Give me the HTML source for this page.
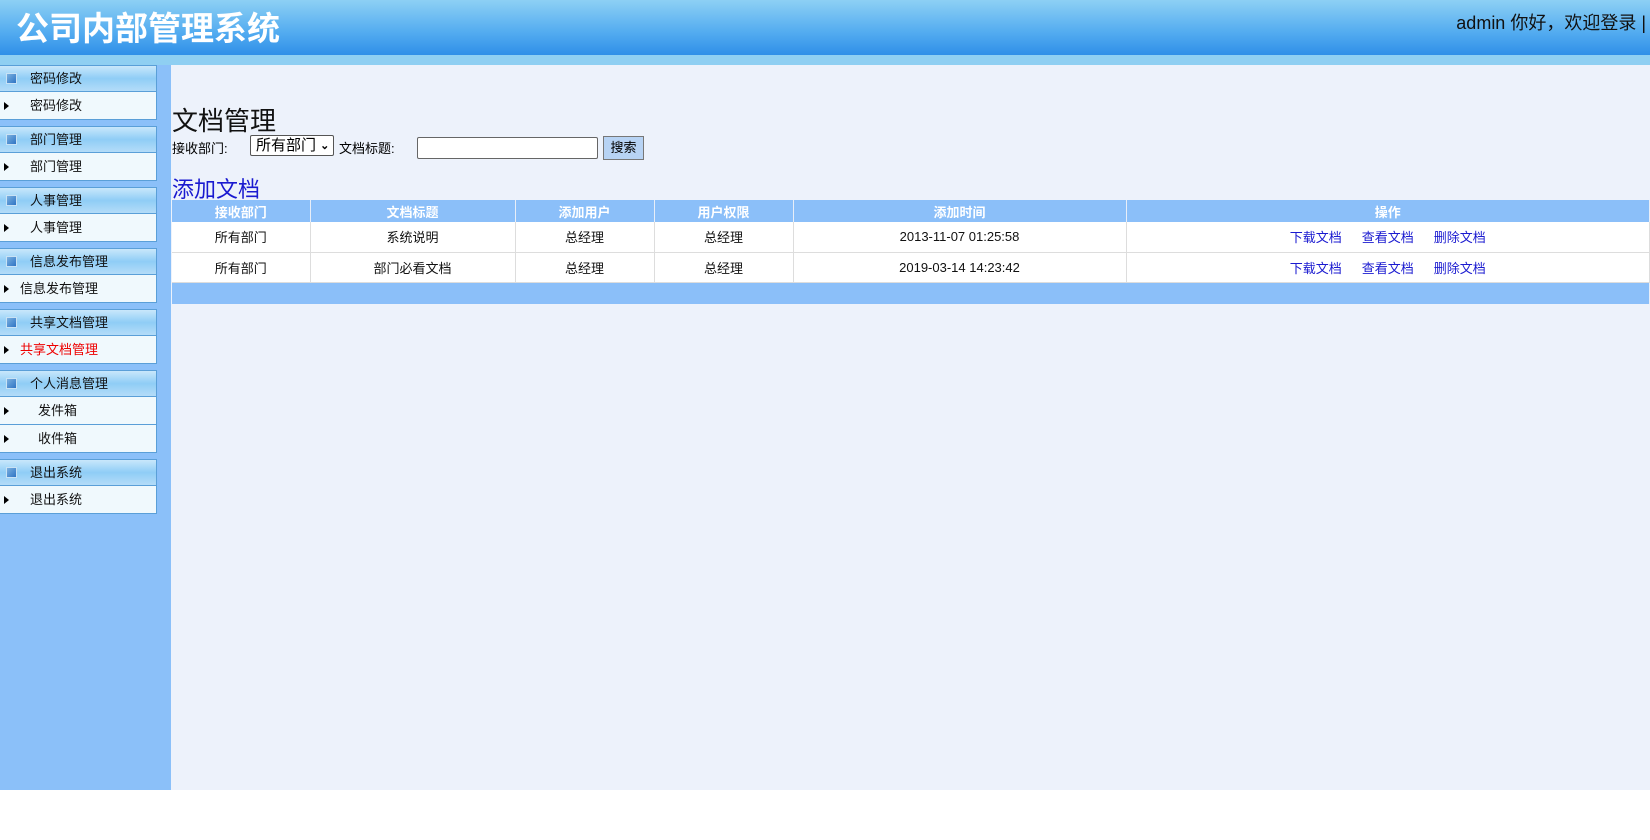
<!DOCTYPE html>
<html><head><meta charset="utf-8"><style>
*{margin:0;padding:0;box-sizing:border-box}
body{width:1650px;height:840px;background:#fff;font-family:"Liberation Sans","Noto Sans CJK SC",sans-serif;font-size:13px;position:relative;overflow:hidden}
.hd{position:absolute;left:0;top:0;width:1650px;height:55px;background:linear-gradient(#8dd0f4,#52abf0 60%,#2f8fe8)}
.hd h1{position:absolute;left:16px;top:12px;color:#fff;font-size:33px;font-weight:bold;line-height:1}
.hd .u{position:absolute;right:4px;top:9px;font-size:18px;color:#111}
.strip{position:absolute;left:0;top:55px;width:1650px;height:10px;background:#8fcff2}
.side{position:absolute;left:0;top:65px;width:171px;height:725px;background:#8bc0f9}
.main{position:absolute;left:171px;top:65px;width:1479px;height:725px;background:#edf2fb}
.g{position:absolute;left:0;width:157px;border:1px solid #5a9fd8;border-left:none;background:#f0f9fd}
.g .h{height:25px;background:linear-gradient(#c9e7fb,#8fcdf6 50%,#b4dcf8);position:relative;line-height:25px;padding-left:30px;font-size:13px;color:#111}
.g .h i{position:absolute;left:6px;top:7px;width:11px;height:11px;background:linear-gradient(135deg,#7ab0e0,#2f74c4);border:1px solid #c8e2f5}
.g .it{height:28px;line-height:27px;border-top:1px solid #5a9fd8;position:relative;padding-left:30px;color:#111}
.g .it:before{content:"";position:absolute;left:4px;top:10px;border-left:5px solid #000;border-top:4px solid transparent;border-bottom:4px solid transparent}
.t{position:absolute;left:172px;font-size:26px;color:#111;top:101px}
.f{position:absolute;top:137px;left:172px;height:22px;width:600px}
.f span{position:absolute;top:1px;font-size:13px}
table{position:absolute;left:172px;top:200px;width:1478px;border-collapse:collapse;font-size:13px}
th{background:#8bbff9;color:#fff;height:22px;font-weight:bold;border-right:1px solid #e8eef8}
td{background:#fff;height:30px;text-align:center;vertical-align:middle;border-right:1px solid #ddd;border-bottom:1px solid #ddd;color:#111}
td a{color:#1a1ad0;margin:0 10px}
</style></head><body>
<div class="hd"><h1>公司内部管理系统</h1><div class="u">admin 你好，欢迎登录 |</div></div>
<div class="strip"></div>
<div class="side">
<div class="g" style="top:0"><div class="h"><i></i>密码修改</div><div class="it">密码修改</div></div>
<div class="g" style="top:61px"><div class="h"><i></i>部门管理</div><div class="it">部门管理</div></div>
<div class="g" style="top:122px"><div class="h"><i></i>人事管理</div><div class="it">人事管理</div></div>
<div class="g" style="top:183px"><div class="h"><i></i>信息发布管理</div><div class="it" style="padding-left:20px">信息发布管理</div></div>
<div class="g" style="top:244px"><div class="h"><i></i>共享文档管理</div><div class="it" style="padding-left:20px;color:#e00">共享文档管理</div></div>
<div class="g" style="top:305px"><div class="h"><i></i>个人消息管理</div><div class="it" style="padding-left:38px">发件箱</div><div class="it" style="padding-left:38px">收件箱</div></div>
<div class="g" style="top:394px"><div class="h"><i></i>退出系统</div><div class="it">退出系统</div></div>
</div>
<div class="main"></div>
<div class="t">文档管理</div>
<div class="f">
<span style="left:0">接收部门:</span>
<div style="position:absolute;left:78px;top:-2px;width:84px;height:21px;border:1px solid #555;background:#fff;border-radius:2px;font-size:15px;padding-left:5px;line-height:19px">所有部门 <span style="position:relative;top:-1px;font-size:11px;font-weight:bold">&#8964;</span></div>
<span style="left:167px">文档标题:</span>
<div style="position:absolute;left:245px;top:0;width:181px;height:22px;border:1px solid #666;background:#fff;border-radius:2px"></div>
<div style="position:absolute;left:431px;top:-1px;width:41px;height:24px;border:1px solid #777;background:#b7d3f4;font-size:13px;text-align:center;line-height:22px">搜索</div>
</div>
<div style="position:absolute;left:172px;top:172px;font-size:22px;color:#1a1ad0">添加文档</div>
<table>
<tr><th style="width:138px">接收部门</th><th style="width:205px">文档标题</th><th style="width:139px">添加用户</th><th style="width:139px">用户权限</th><th style="width:333px">添加时间</th><th>操作</th></tr>
<tr><td>所有部门</td><td>系统说明</td><td>总经理</td><td>总经理</td><td>2013-11-07 01:25:58</td><td><a>下载文档</a><a>查看文档</a><a>删除文档</a></td></tr>
<tr><td>所有部门</td><td>部门必看文档</td><td>总经理</td><td>总经理</td><td>2019-03-14 14:23:42</td><td><a>下载文档</a><a>查看文档</a><a>删除文档</a></td></tr>
<tr><th colspan="6" style="height:22px"></th></tr>
</table>
</body></html>
